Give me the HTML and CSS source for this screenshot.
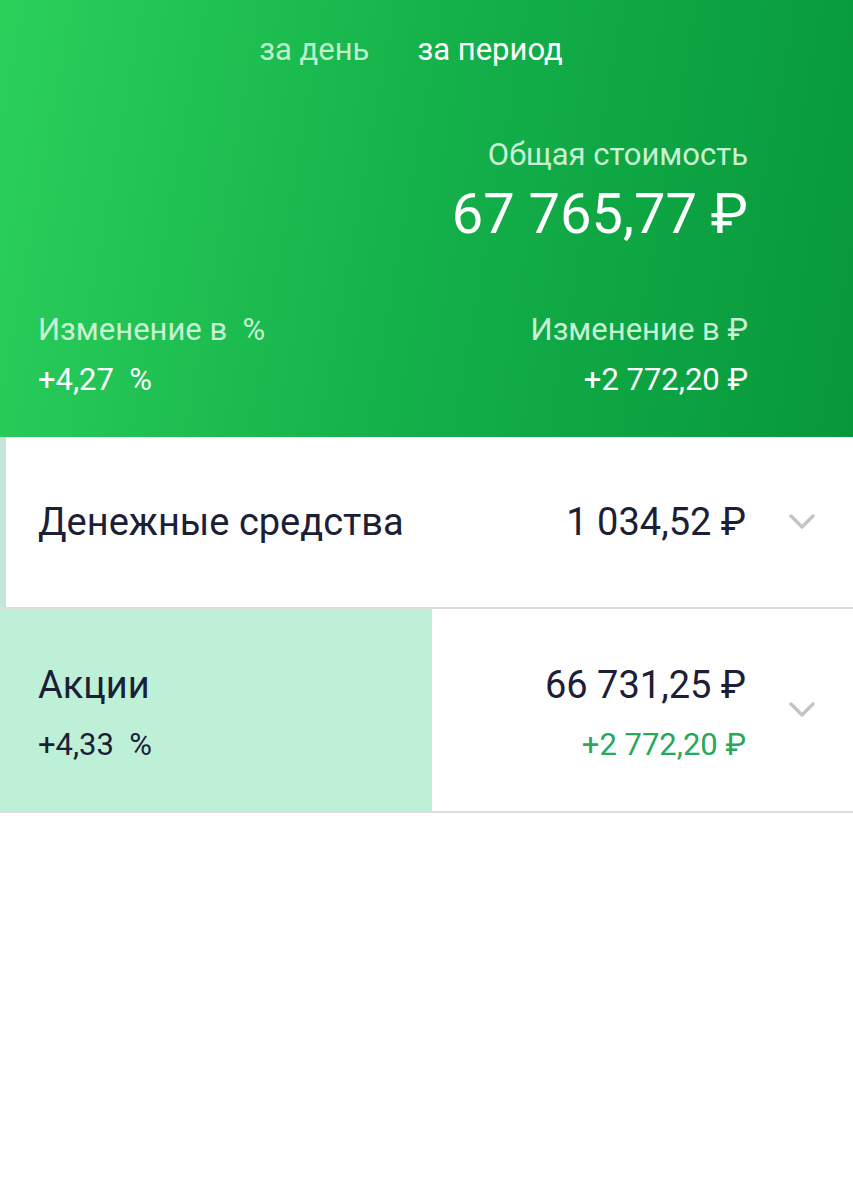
FILE: index.html
```html
<!DOCTYPE html>
<html lang="ru">
<head>
    <meta charset="UTF-8">
    <meta name="viewport" content="width=device-width, initial-scale=1.0">
    <title>Портфель</title>
    <link rel="stylesheet" href="styles.css">
</head>
<body>
    <div class="summary">
        <div class="tabs">
            <span class="tab">за день</span>
            <span class="tab active">за период</span>
        </div>
        <div class="total">
            <p class="label">Общая стоимость</p>
            <p class="total-value">67 765,77 ₽</p>
        </div>
        <div class="changes">
            <div class="change">
                <p class="label">Изменение в&nbsp; %</p>
                <p class="change-value">+4,27&nbsp; %</p>
            </div>
            <div class="change right">
                <p class="label">Изменение в ₽</p>
                <p class="change-value">+2 772,20 ₽</p>
            </div>
        </div>
    </div>

    <div class="assets">
        <div class="asset cash">
            <div class="asset-name">
                <p class="name">Денежные средства</p>
            </div>
            <div class="asset-sum">
                <p class="amount">1 034,52 ₽</p>
            </div>
            <svg class="chevron" viewBox="0 0 26 16" width="26" height="16">
                <path d="M2 2 L13 13 L24 2" fill="none" stroke="#c4c4c4" stroke-width="3.5" stroke-linecap="round" stroke-linejoin="round"/>
            </svg>
        </div>
        <div class="asset stocks">
            <div class="asset-name">
                <p class="name">Акции</p>
                <p class="percent">+4,33&nbsp; %</p>
            </div>
            <div class="asset-sum">
                <p class="amount">66 731,25 ₽</p>
                <p class="profit">+2 772,20 ₽</p>
            </div>
            <svg class="chevron" viewBox="0 0 26 16" width="26" height="16">
                <path d="M2 2 L13 13 L24 2" fill="none" stroke="#c4c4c4" stroke-width="3.5" stroke-linecap="round" stroke-linejoin="round"/>
            </svg>
        </div>
    </div>
</body>
</html>
```

FILE: styles.css
```css
body {
    font-family: Roboto, 'Noto Sans', sans-serif;
    margin: 0;
    padding: 0;
    background: #fff;
    color: #1b2036;
}

p {
    margin: 0;
}

.summary {
    height: 437px;
    box-sizing: border-box;
    padding: 31px 105px 0 38px;
    background: linear-gradient(100deg, #2bd05b 0%, #14b04a 50%, #07983b 100%);
    color: #fff;
}

.tabs {
    display: flex;
    justify-content: center;
    gap: 48px;
    padding-left: 36px;
    font-size: 31px;
    line-height: 38px;
}

.tab {
    color: #bdf0cc;
}

.tab.active {
    color: #fff;
}

.label {
    color: #c8f2d4;
    font-size: 31px;
    line-height: 36px;
}

.total {
    text-align: right;
    margin-top: 68px;
}

.total-value {
    font-size: 56px;
    line-height: 66px;
    margin-top: 8px;
}

.changes {
    display: flex;
    justify-content: space-between;
    margin-top: 65px;
}

.change.right {
    text-align: right;
}

.change-value {
    font-size: 31px;
    line-height: 36px;
    margin-top: 14px;
}

.asset {
    display: flex;
    align-items: center;
    padding: 0 38px;
    border-bottom: 2px solid #dedede;
}

.asset.cash {
    height: 170px;
    background: linear-gradient(to right, #c6e4db 6px, #fff 6px);
}

.asset.stocks {
    height: 202px;
    background: linear-gradient(to right, #bef0d8 432px, #fff 432px);
}

.asset.stocks .asset-name,
.asset.stocks .asset-sum {
    margin-top: 6px;
}

.asset-name {
    flex: 1;
}

.asset-sum {
    text-align: right;
}

.name,
.amount {
    font-size: 38px;
    line-height: 44px;
}

.percent,
.profit {
    font-size: 31px;
    line-height: 36px;
    margin-top: 20px;
}

.profit {
    color: #28a85a;
}

.chevron {
    margin-left: 43px;
}
```
